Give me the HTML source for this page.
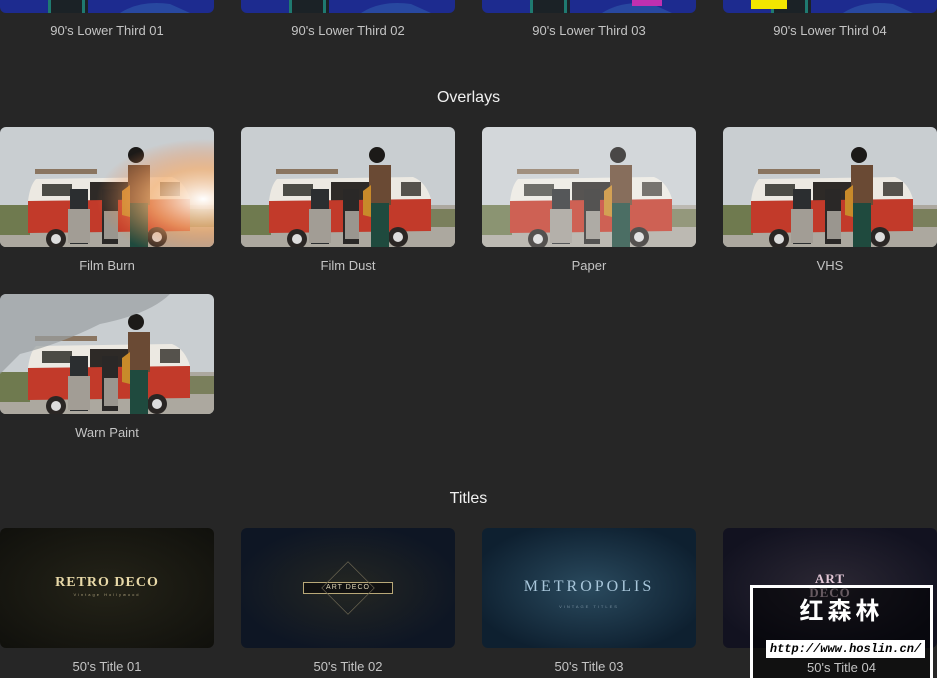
<!DOCTYPE html>
<html><head><meta charset="utf-8"><style>
*{margin:0;padding:0;box-sizing:border-box}
body{width:937px;height:678px;background:#262626;position:relative;overflow:hidden;font-family:"Liberation Sans",sans-serif}
.t{position:absolute;width:214px;height:120px;border-radius:6px;overflow:hidden}
.l{position:absolute;width:214px;text-align:center;color:#c4c4c4;font-size:13px}
.h{position:absolute;width:937px;text-align:center;color:#f0f0f0;font-size:16px}
svg{display:block}
</style></head><body>
<svg width="0" height="0" style="position:absolute">
<defs>
<symbol id="van" viewBox="0 0 214 120">
<rect width="214" height="120" fill="#c9ced1"/>
<rect y="78" width="214" height="42" fill="#aca89f"/>
<rect y="78" width="30" height="30" fill="#6f7a4f"/>
<rect x="185" y="82" width="29" height="18" fill="#7a7f5c"/>
<rect x="35" y="42" width="62" height="5" fill="#8a7560"/>
<path d="M36 52 L172 50 Q185 55 190 72 L28 74 Q30 58 36 52Z" fill="#ece9e2"/>
<rect x="42" y="57" width="30" height="12" fill="#4b4b45"/>
<rect x="90" y="55" width="40" height="48" fill="#2e2a27"/>
<rect x="160" y="55" width="20" height="14" fill="#55524c"/>
<path d="M28 74 L190 72 L190 104 L28 106Z" fill="#c23a2a"/>
<circle cx="56" cy="112" r="10" fill="#2a2624"/><circle cx="56" cy="112" r="5" fill="#ddd"/>
<circle cx="157" cy="110" r="10" fill="#2a2624"/><circle cx="157" cy="110" r="5" fill="#ddd"/>
<rect x="70" y="62" width="18" height="55" fill="#2b2e30"/>
<rect x="68" y="82" width="22" height="34" fill="#a29d95"/>
<rect x="102" y="62" width="16" height="55" fill="#2a2827"/>
<rect x="104" y="84" width="14" height="28" fill="#9a968f"/>
<circle cx="136" cy="28" r="8" fill="#1c1a18"/>
<rect x="128" y="38" width="22" height="40" fill="#6a4a34"/>
<rect x="130" y="76" width="18" height="44" fill="#1f4a3e"/>
<path d="M122 64 L130 58 L130 90 L122 88Z" fill="#c88a2a"/>
</symbol>
<symbol id="blue" viewBox="0 0 214 13" preserveAspectRatio="none">
<rect width="214" height="13" fill="#1d2b8f"/>
<rect x="48" width="40" height="13" fill="#1b2226"/>
<rect x="48" width="3" height="13" fill="#1f7a70"/>
<rect x="82" width="3" height="13" fill="#1f7a70"/>
<path d="M120 13 Q140 0 170 4 L190 13Z" fill="#2848a0"/>
</symbol>
</defs></svg>

<div class="t" style="left:0;top:-107px"><div style="margin-top:107px;height:13px"><svg width="214" height="13" viewBox="0 0 214 13" preserveAspectRatio="none"><use href="#blue" width="214" height="13"/></svg></div></div>
<div class="t" style="left:241px;top:-107px"><div style="margin-top:107px;height:13px"><svg width="214" height="13" viewBox="0 0 214 13" preserveAspectRatio="none"><use href="#blue" width="214" height="13"/></svg></div></div>
<div class="t" style="left:482px;top:-107px"><div style="margin-top:107px;height:13px"><svg width="214" height="13" viewBox="0 0 214 13" preserveAspectRatio="none"><use href="#blue" width="214" height="13"/><rect x="150" y="0" width="30" height="6" fill="#c030b0"/></svg></div></div>
<div class="t" style="left:723px;top:-107px"><div style="margin-top:107px;height:13px"><svg width="214" height="13" viewBox="0 0 214 13" preserveAspectRatio="none"><use href="#blue" width="214" height="13"/><rect x="28" y="0" width="36" height="9" fill="#f2e600"/></svg></div></div>
<div class="l" style="left:0;top:23px">90's Lower Third 01</div>
<div class="l" style="left:241px;top:23px">90's Lower Third 02</div>
<div class="l" style="left:482px;top:23px">90's Lower Third 03</div>
<div class="l" style="left:723px;top:23px">90's Lower Third 04</div>

<div class="h" style="top:89px">Overlays</div>
<div class="t" style="left:0;top:127px"><svg width="214" height="120"><use href="#van"/><defs><radialGradient id="burn" cx="0.95" cy="0.6" r="0.5"><stop offset="0" stop-color="#fff" stop-opacity="1"/><stop offset="0.5" stop-color="#f6b070" stop-opacity=".7"/><stop offset="1" stop-color="#f08040" stop-opacity="0"/></radialGradient></defs><rect width="214" height="120" fill="url(#burn)"/></svg></div>
<div class="t" style="left:241px;top:127px"><svg width="214" height="120"><use href="#van"/></svg></div>
<div class="t" style="left:482px;top:127px"><svg width="214" height="120"><use href="#van"/><rect width="214" height="120" fill="#fff" opacity=".2"/></svg></div>
<div class="t" style="left:723px;top:127px"><svg width="214" height="120"><use href="#van"/></svg></div>
<div class="l" style="left:0;top:258px">Film Burn</div>
<div class="l" style="left:241px;top:258px">Film Dust</div>
<div class="l" style="left:482px;top:258px">Paper</div>
<div class="l" style="left:723px;top:258px">VHS</div>
<div class="t" style="left:0;top:294px"><svg width="214" height="120"><use href="#van"/><path d="M0 0 H170 Q150 20 100 30 Q60 50 20 60 L0 80Z" fill="#9aa0a3" opacity=".7"/></svg></div>
<div class="l" style="left:0;top:425px">Warn Paint</div>

<div class="h" style="top:490px">Titles</div>
<div class="t" style="left:0;top:528px;background:radial-gradient(ellipse at center,#242318,#10100c);">
<div style="position:absolute;top:47px;width:214px;text-align:center;color:#e8d9a8;font-family:'Liberation Serif',serif;font-weight:bold;font-size:14px;letter-spacing:1px">RETRO DECO</div>
<div style="position:absolute;top:64px;width:214px;text-align:center;color:#a89c78;font-size:4px;letter-spacing:2px">Vintage Hollywood</div></div>
<div class="t" style="left:241px;top:528px;background:radial-gradient(ellipse at center,#242622,#0e1624 75%);">
<div style="position:absolute;left:62px;top:54px;width:90px;height:12px;border:1px solid #b8a878;background:#111;color:#e0d6b8;font-size:7px;text-align:center;line-height:10px;letter-spacing:1px">ART DECO</div>
<div style="position:absolute;left:80px;top:33px;width:54px;height:54px;transform:rotate(45deg) scale(.7);border:1px solid #6a6450"></div></div>
<div class="t" style="left:482px;top:528px;background:radial-gradient(ellipse at center,#2a4a5e,#0e2030 80%);">
<div style="position:absolute;top:50px;width:214px;text-align:center;color:#a8c6da;font-family:'Liberation Serif',serif;font-size:16px;letter-spacing:3px">METROPOLIS</div>
<div style="position:absolute;top:76px;width:214px;text-align:center;color:#7890a0;font-size:4px;letter-spacing:2px">VINTAGE TITLES</div></div>
<div class="t" style="left:723px;top:528px;background:radial-gradient(ellipse at center,#2c2834,#121220 80%);">
<div style="position:absolute;top:44px;width:214px;text-align:center;color:#e4c8d8;font-family:'Liberation Serif',serif;font-weight:bold;font-size:13px;line-height:14px;letter-spacing:1px">ART<br>DECO</div></div>
<div class="l" style="left:0;top:659px">50's Title 01</div>
<div class="l" style="left:241px;top:659px">50's Title 02</div>
<div class="l" style="left:482px;top:659px">50's Title 03</div>

<div style="position:absolute;left:750px;top:585px;width:183px;height:93px;border:3px solid #fff;border-bottom:none;background:rgba(0,0,0,.55)">
<div style="position:absolute;top:10px;width:177px;text-align:center;color:#fff;font-family:'Liberation Sans','Noto Sans CJK SC',sans-serif;font-weight:bold;font-size:24px;letter-spacing:4px;line-height:28px">红森林</div>
<div style="position:absolute;left:13px;top:52px;width:159px;height:18px;background:#fff;color:#000;font-family:'Liberation Mono',monospace;font-style:italic;font-weight:bold;font-size:12px;line-height:18px;text-align:center">http://www.hoslin.cn/</div>
<div style="position:absolute;left:0;top:72px;width:177px;text-align:center;color:#c4c4c4;font-size:13px">50's Title 04</div>
</div>
</body></html>
